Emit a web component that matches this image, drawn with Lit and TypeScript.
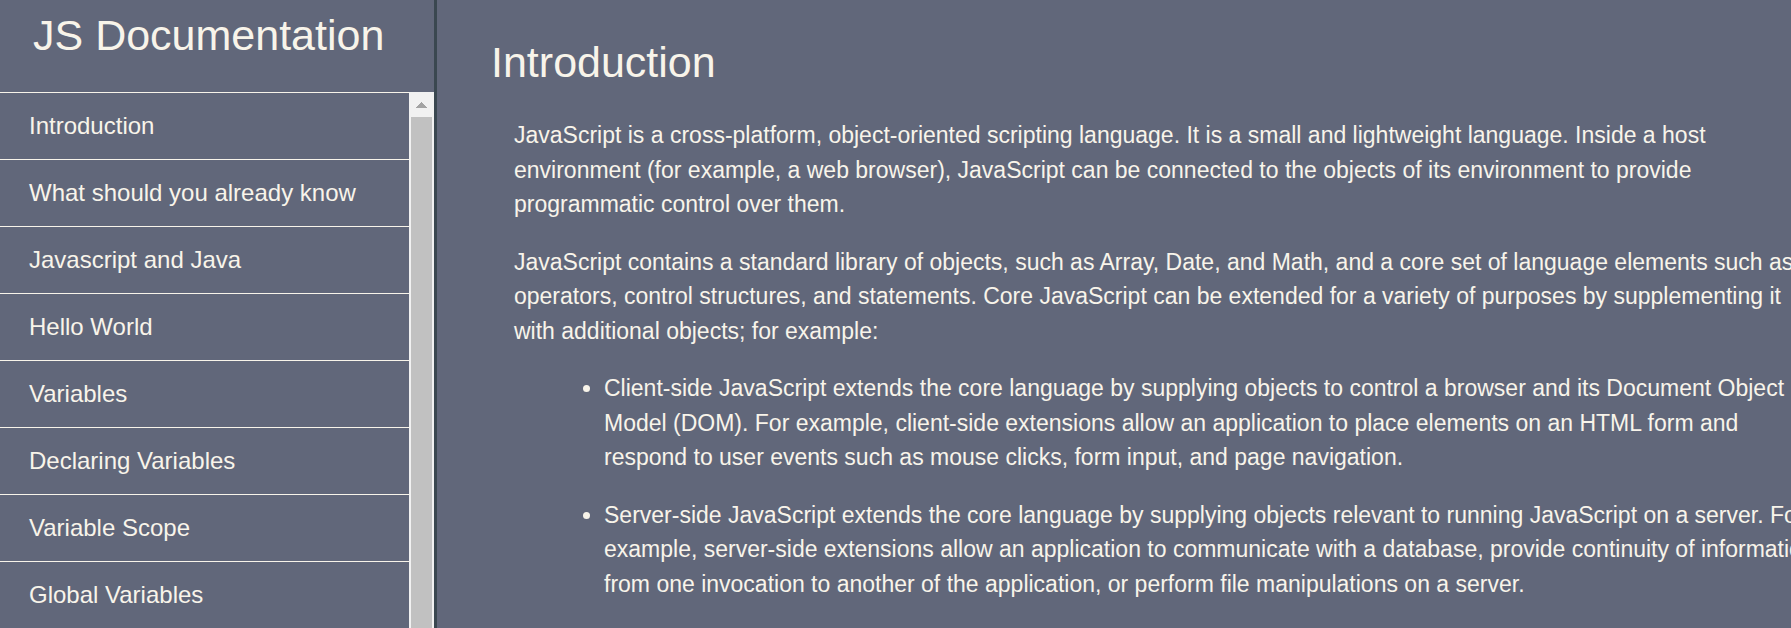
import { LitElement, html, css } from "lit";
import { customElement } from "lit/decorators.js";

const SECTIONS = [
  "Introduction",
  "What should you already know",
  "Javascript and Java",
  "Hello World",
  "Variables",
  "Declaring Variables",
  "Variable Scope",
  "Global Variables",
];

const slug = (title: string) => title.replace(/ /g, "_");

@customElement("doc-sidebar")
export class DocSidebar extends LitElement {
  static styles = css`
    :host {
      display: flex;
      flex-direction: column;
      min-height: 0;
      box-sizing: border-box;
      border-right: 3px solid #3a4750;
    }
    .title {
      margin: 0;
      padding: 11px 33px 32px;
      font-size: 43px;
      line-height: 49px;
      font-weight: 400;
      white-space: nowrap;
    }
    .scroller {
      flex: 1;
      min-height: 0;
      display: grid;
      grid-template-columns: 1fr 25px;
      overflow: hidden;
    }
    .list {
      margin: 0;
      padding: 0;
      list-style: none;
    }
    .link {
      display: block;
      padding: 18px 29px;
      border-top: 1px solid #f8f4ea;
      font-size: 24px;
      line-height: 30px;
      color: inherit;
      text-decoration: none;
      white-space: nowrap;
    }
    .track {
      display: flex;
      flex-direction: column;
      min-height: 0;
      padding: 0 2px;
      background: #f1f1f1;
    }
    .arrow {
      flex: none;
      height: 25px;
      padding: 0;
      border: 0;
      background: none;
    }
    .arrow svg {
      display: block;
      margin: 0 auto;
    }
    .thumb {
      flex: 1;
      background: #c1c1c1;
    }
  `;

  render() {
    return html`
      <h1 class="title">JS Documentation</h1>
      <div class="scroller">
        <nav aria-label="Sections">
          <ul class="list">
            ${SECTIONS.map(
              (title) => html`<li><a class="link" href="#${slug(title)}">${title}</a></li>`
            )}
          </ul>
        </nav>
        <div class="track">
          <button class="arrow" aria-label="Scroll up">
            <svg width="11" height="6" viewBox="0 0 11 6" shape-rendering="crispEdges">
              <path d="M5 0h1v1h1v1h1v1h1v1h1v1h1v1H0V5h1V4h1V3h1V2h1V1h1z" fill="#a3a3a3" />
            </svg>
          </button>
          <div class="thumb"></div>
        </div>
      </div>
    `;
  }
}

@customElement("app-root")
export class AppRoot extends LitElement {
  static styles = css`
    :host {
      display: grid;
      grid-template-columns: 437px minmax(0, 1fr);
      grid-template-rows: minmax(0, 1fr);
      height: 100vh;
      overflow: hidden;
      background: #61677a;
      color: #f8f4ea;
      font-family: Arial, "Liberation Sans", sans-serif;
    }
    .content {
      margin-right: -30px;
      padding: 38px 0 0 54px;
    }
    .heading {
      margin: 0 0 31px;
      font-size: 43px;
      line-height: 49px;
      font-weight: 400;
    }
    .body {
      padding-left: 23px;
      font-size: 23px;
      line-height: 1.5;
    }
    .text {
      margin: 0 0 23px;
    }
    .points {
      margin: 0;
      padding-left: 90px;
    }
  `;

  render() {
    return html`
      <doc-sidebar></doc-sidebar>
      <main class="content">
        <section id="Introduction">
          <h2 class="heading">Introduction</h2>
          <div class="body">
            <p class="text">
              JavaScript is a cross-platform, object-oriented scripting language. It is a small and
              lightweight language. Inside a host environment (for example, a web browser),
              JavaScript can be connected to the objects of its environment to provide programmatic
              control over them.
            </p>
            <p class="text">
              JavaScript contains a standard library of objects, such as Array, Date, and Math, and
              a core set of language elements such as operators, control structures, and statements.
              Core JavaScript can be extended for a variety of purposes by supplementing it with
              additional objects; for example:
            </p>
            <ul class="points">
              <li class="text">
                Client-side JavaScript extends the core language by supplying objects to control a
                browser and its Document Object Model (DOM). For example, client-side extensions
                allow an application to place elements on an HTML form and respond to user events
                such as mouse clicks, form input, and page navigation.
              </li>
              <li class="text">
                Server-side JavaScript extends the core language by supplying objects relevant to
                running JavaScript on a server. For example, server-side extensions allow an
                application to communicate with a database, provide continuity of information from
                one invocation to another of the application, or perform file manipulations on a
                server.
              </li>
            </ul>
          </div>
        </section>
      </main>
    `;
  }
}
